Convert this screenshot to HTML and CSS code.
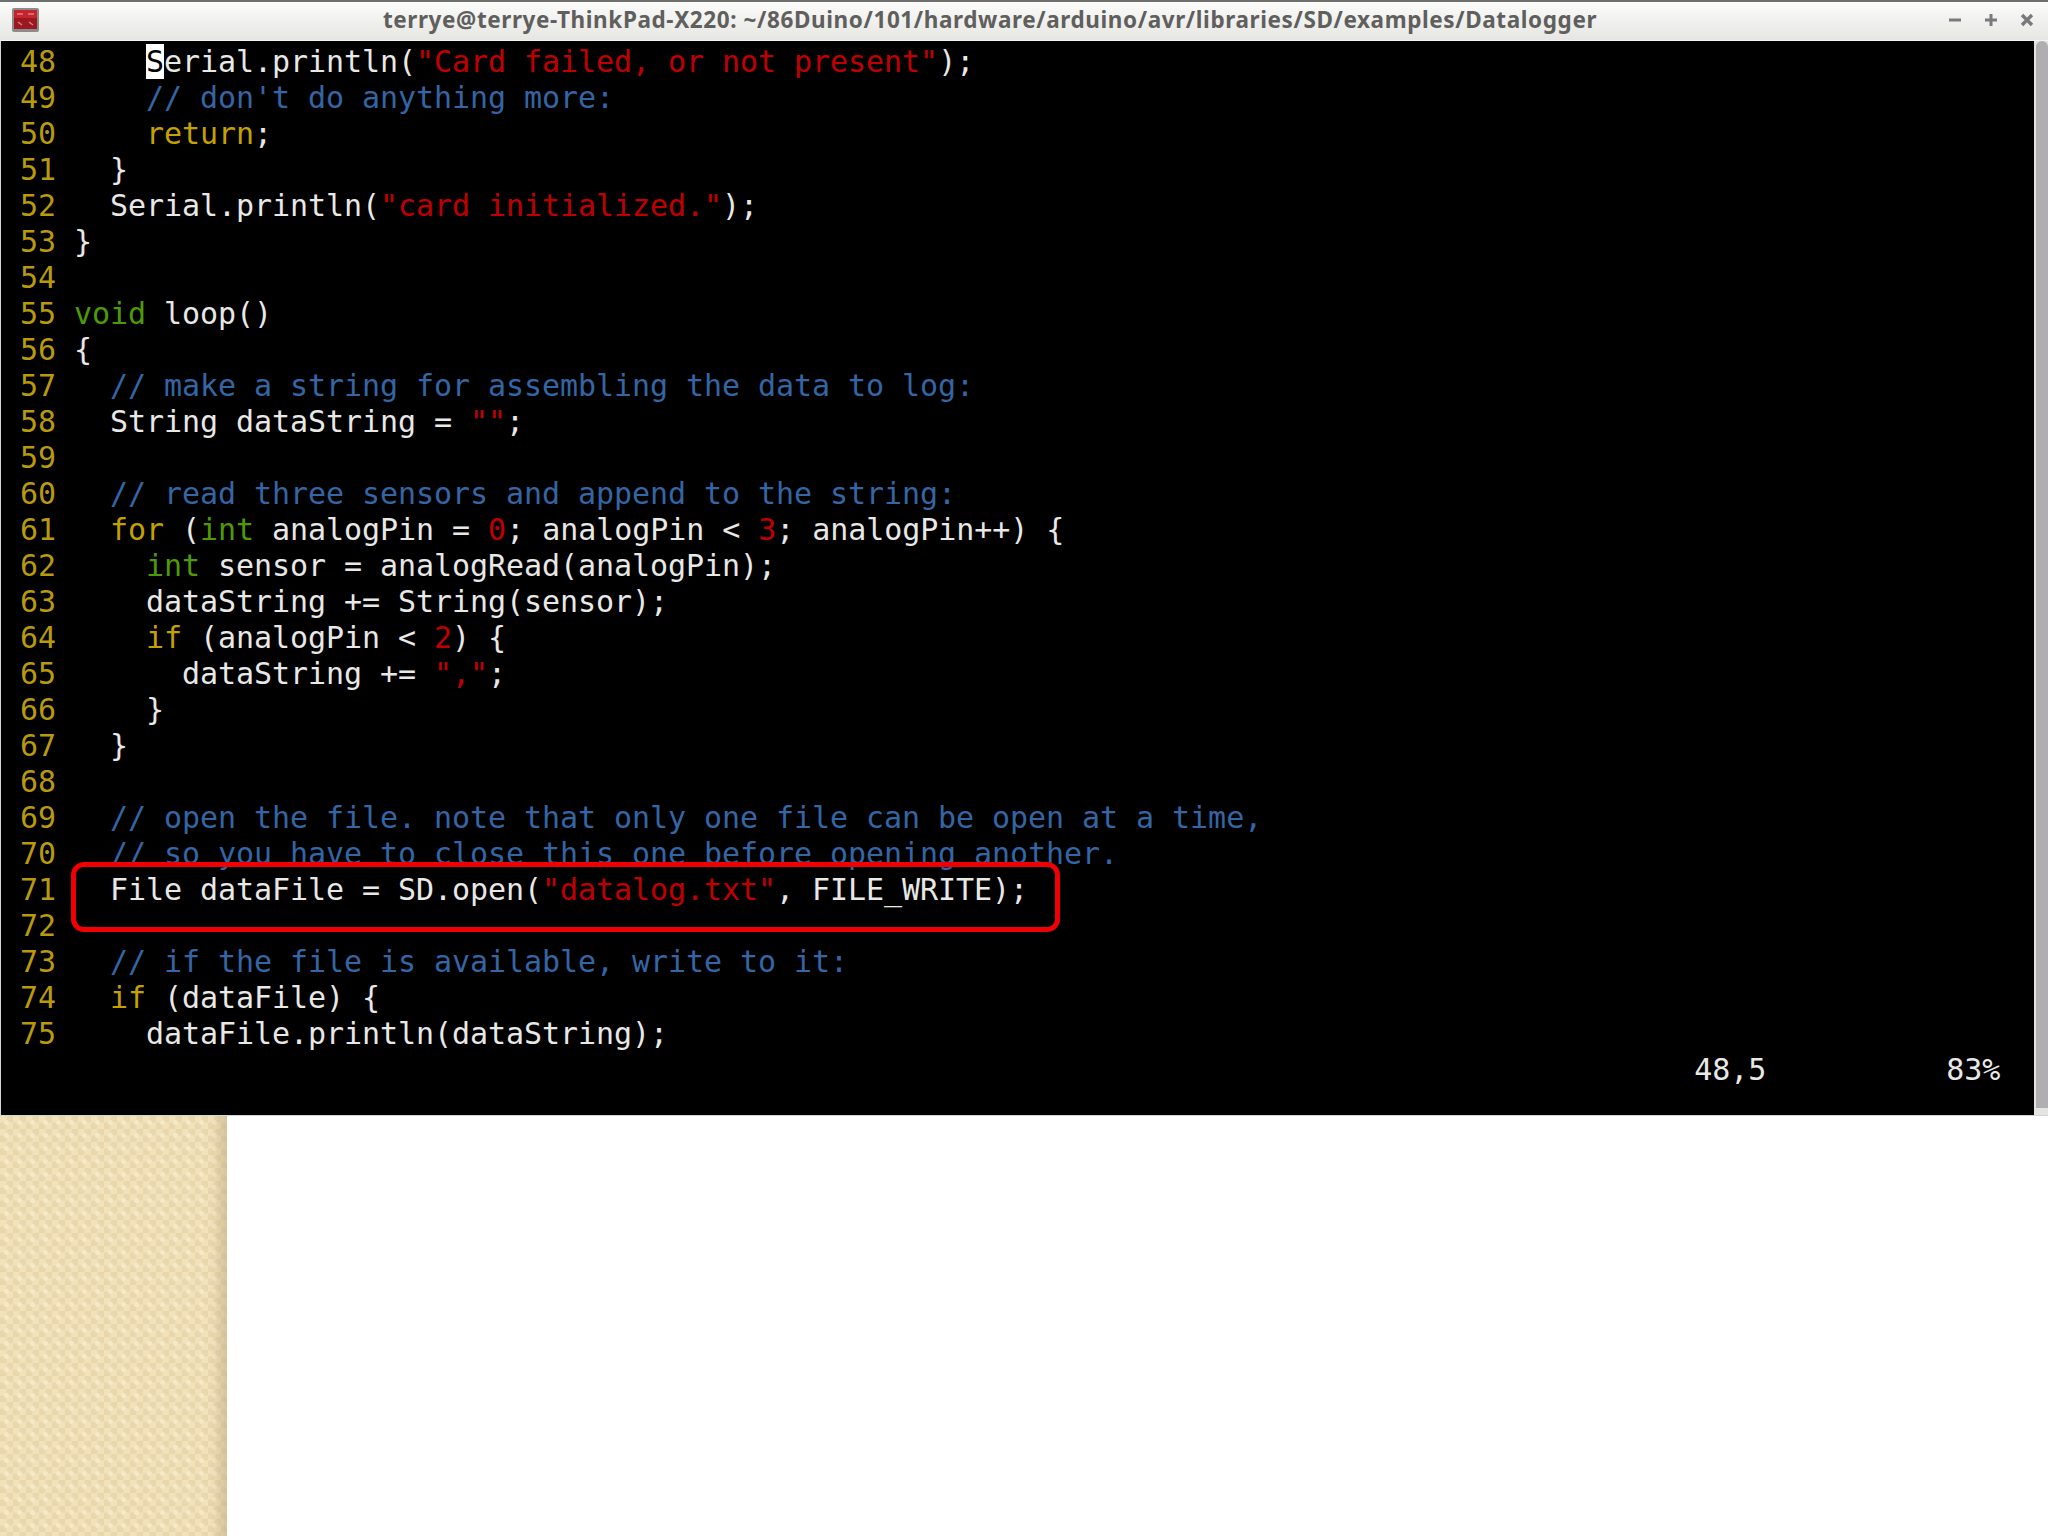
FILE: index.html
```html
<!DOCTYPE html>
<html lang="en">
<head>
<meta charset="utf-8">
<title>Datalogger</title>
<link rel="stylesheet" href="styles.css">
</head>
<body>
<div class="window">
  <header class="titlebar">
    <svg class="app-icon" width="27" height="24" viewBox="0 0 27 24" aria-hidden="true">
      <rect width="27" height="24" rx="2" fill="#8c8c8a"/>
      <rect x="2" y="2" width="23" height="19" fill="#9c1820"/>
      <rect x="2" y="2" width="23" height="8" fill="#c4242c"/>
      <path d="M5 6h6M16 6h6M6 14l4 3M17 14l4 3" stroke="#dc8088" stroke-width="1.5" fill="none"/>
    </svg>
    <div class="title">terrye@terrye-ThinkPad-X220: ~/86Duino/101/hardware/arduino/avr/libraries/SD/examples/Datalogger</div>
    <div class="controls">
      <svg width="14" height="14" viewBox="0 0 14 14" aria-hidden="true"><path d="M1 7h12" stroke="#7a7a7a" stroke-width="3"/></svg>
      <svg width="14" height="14" viewBox="0 0 14 14" aria-hidden="true"><path d="M1 7h12M7 1v12" stroke="#7a7a7a" stroke-width="3"/></svg>
      <svg width="14" height="14" viewBox="0 0 14 14" aria-hidden="true"><path d="M2 2l10 10M12 2L2 12" stroke="#7a7a7a" stroke-width="3.4"/></svg>
    </div>
  </header>
  <div class="body">
    <main class="terminal">
<div class="row"><span class="n"> 48 </span>    <span class="cursor">S</span>erial.println(<span class="s">"Card failed, or not present"</span>);</div>
<div class="row"><span class="n"> 49 </span>    <span class="c">// don't do anything more:</span></div>
<div class="row"><span class="n"> 50 </span>    <span class="k">return</span>;</div>
<div class="row"><span class="n"> 51 </span>  }</div>
<div class="row"><span class="n"> 52 </span>  Serial.println(<span class="s">"card initialized."</span>);</div>
<div class="row"><span class="n"> 53 </span>}</div>
<div class="row"><span class="n"> 54 </span></div>
<div class="row"><span class="n"> 55 </span><span class="t">void</span> loop()</div>
<div class="row"><span class="n"> 56 </span>{</div>
<div class="row"><span class="n"> 57 </span>  <span class="c">// make a string for assembling the data to log:</span></div>
<div class="row"><span class="n"> 58 </span>  String dataString = <span class="s">""</span>;</div>
<div class="row"><span class="n"> 59 </span></div>
<div class="row"><span class="n"> 60 </span>  <span class="c">// read three sensors and append to the string:</span></div>
<div class="row"><span class="n"> 61 </span>  <span class="k">for</span> (<span class="t">int</span> analogPin = <span class="s">0</span>; analogPin &lt; <span class="s">3</span>; analogPin++) {</div>
<div class="row"><span class="n"> 62 </span>    <span class="t">int</span> sensor = analogRead(analogPin);</div>
<div class="row"><span class="n"> 63 </span>    dataString += String(sensor);</div>
<div class="row"><span class="n"> 64 </span>    <span class="k">if</span> (analogPin &lt; <span class="s">2</span>) {</div>
<div class="row"><span class="n"> 65 </span>      dataString += <span class="s">","</span>;</div>
<div class="row"><span class="n"> 66 </span>    }</div>
<div class="row"><span class="n"> 67 </span>  }</div>
<div class="row"><span class="n"> 68 </span></div>
<div class="row"><span class="n"> 69 </span>  <span class="c">// open the file. note that only one file can be open at a time,</span></div>
<div class="row"><span class="n"> 70 </span>  <span class="c">// so you have to close this one before opening another.</span></div>
<div class="row"><span class="n"> 71 </span>  File dataFile = SD.open(<span class="s">"datalog.txt"</span>, FILE_WRITE);</div>
<div class="row"><span class="n"> 72 </span></div>
<div class="row"><span class="n"> 73 </span>  <span class="c">// if the file is available, write to it:</span></div>
<div class="row"><span class="n"> 74 </span>  <span class="k">if</span> (dataFile) {</div>
<div class="row"><span class="n"> 75 </span>    dataFile.println(dataString);</div>
<div class="row">                                                                                              48,5          83%</div>
      <div class="highlight"></div>
    </main>
    <div class="scrollbar"><div class="thumb"></div></div>
  </div>
</div>
<div class="desktop"><div class="wallpaper"></div><div class="blank"></div></div>
</body>
</html>
```
FILE: styles.css
```css
* { box-sizing: border-box; }
html, body { margin: 0; height: 100%; background: #fff; }
body { display: flex; flex-direction: column; height: 1536px; overflow: hidden; }
.window { height: 1116px; display: flex; flex-direction: column; flex: none; }
.titlebar {
  height: 41px; flex: none; display: flex; align-items: center; position: relative;
  border-top: 2px solid #6f6f6d;
  border-bottom: 1px solid #f4f4f2;
  background: linear-gradient(#fbfbfa, #e6e6e3);
  padding-left: 12px;
}
.app-icon { flex: none; margin-top: -3px; }
.title {
  position: absolute; left: 0; right: 68px; top: -3px; bottom: 0;
  display: flex; align-items: center; justify-content: center;
  font: bold 22.5px "Noto Sans", sans-serif; letter-spacing: 0.6px; color: #5f5f5d; white-space: nowrap;
}
.controls { margin-left: auto; display: flex; gap: 22px; padding-right: 14px; margin-top: -3px; }
.body { flex: 1; display: flex; background: #d4d4d2; padding-left: 1px; padding-bottom: 1px; min-height: 0; }
.terminal {
  position: relative; width: 2033px; flex: none; background: #000; padding: 3px 0 0 1px;
  font: 30px/36px "DejaVu Sans Mono", monospace; letter-spacing: -0.06px; color: #e8e8e6;
  overflow: hidden;
}
.row { height: 36px; white-space: pre; }
.n { color: #b89a0c; }
.c { color: #3465a4; }
.s { color: #c00000; }
.k { color: #c4a000; }
.t { color: #4e9a06; }
.cursor { background: #fff; color: #000; }
.highlight {
  position: absolute; left: 70px; top: 821px; width: 989px; height: 70px;
  border: 5px solid #f00000; border-radius: 13px;
}
.scrollbar { width: 14px; flex: none; background: #e4e4e2; padding: 0 0 7px 2px; }
.thumb { height: 100%; background: #b0aeb0; border-radius: 6px 6px 0 0; }
.desktop { flex: 1; display: flex; min-height: 0; }
.wallpaper {
  width: 227px; flex: none; position: relative;
  background-color: #f1e2bc;
  background-image:
    linear-gradient(90deg, rgba(241,226,188,0) 210px, rgba(190,170,130,.55) 227px),
    radial-gradient(circle at 6.5px 6.5px, #f6e9c8 2px, rgba(0,0,0,0) 3px),
    linear-gradient(45deg, #e9d7ab 25%, rgba(0,0,0,0) 25%, rgba(0,0,0,0) 75%, #e9d7ab 75%),
    linear-gradient(45deg, #e9d7ab 25%, rgba(0,0,0,0) 25%, rgba(0,0,0,0) 75%, #e9d7ab 75%);
  background-size: 100% 100%, 13px 13px, 13px 13px, 13px 13px;
  background-position: 0 0, 0 0, 0 0, 6.5px 6.5px;
}
.blank { flex: 1; background: #fff; }
```
